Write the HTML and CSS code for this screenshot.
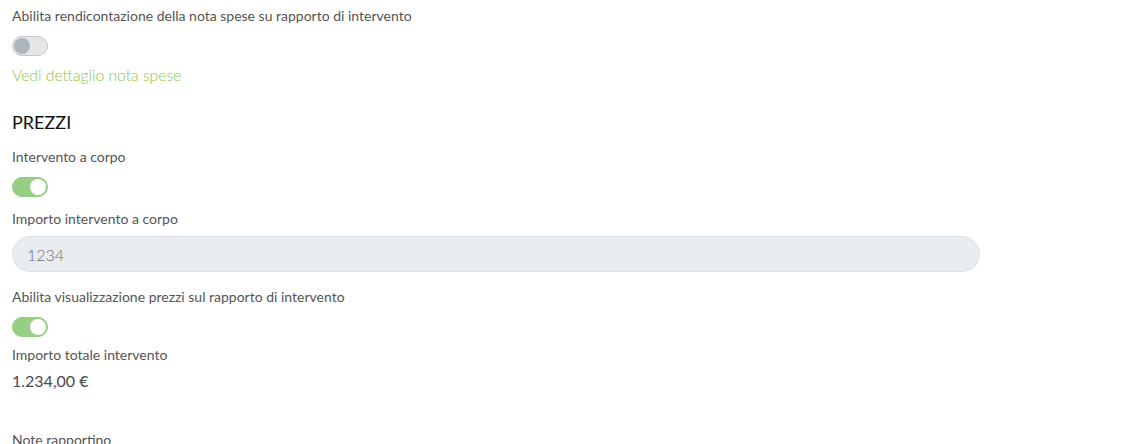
FILE: index.html
```html
<!DOCTYPE html>
<html lang="it">
<head>
    <meta charset="UTF-8">
    <meta name="viewport" content="width=device-width, initial-scale=1.0">
    <title>Rapporto di intervento - Impostazioni</title>
    <link rel="stylesheet" href="styles.css">
</head>
<body>
    <div class="settings">
        <!-- Nota spese -->
        <div class="field">
            <label class="field-label">Abilita rendicontazione della nota spese su rapporto di intervento</label>
            <span class="switch"></span>
        </div>
        <a href="#" class="link">Vedi dettaglio nota spese</a>

        <!-- Prezzi -->
        <h3 class="section-title">PREZZI</h3>

        <div class="field">
            <label class="field-label">Intervento a corpo</label>
            <span class="switch on"></span>
        </div>

        <div class="field">
            <label class="field-label">Importo intervento a corpo</label>
            <input type="text" class="input" placeholder="1234" disabled>
        </div>

        <div class="field after-input">
            <label class="field-label">Abilita visualizzazione prezzi sul rapporto di intervento</label>
            <span class="switch on"></span>
        </div>

        <div class="field total">
            <label class="field-label">Importo totale intervento</label>
            <div class="value">1.234,00 €</div>
        </div>

        <div class="field notes">
            <label class="field-label">Note rapportino</label>
        </div>
    </div>
</body>
</html>
```

FILE: styles.css
```css
/* General Styles */
body {
    font-family: 'Lato', 'Open Sans', sans-serif;
    background-color: #fff;
    color: #555;
    margin: 0;
    padding: 0;
}

.settings {
    display: flex;
    flex-direction: column;
    align-items: flex-start;
    padding: 6px 12px 0 12px;
    width: 968px;
}

.field {
    display: flex;
    flex-direction: column;
    align-items: flex-start;
    width: 100%;
    margin-top: 12px;
}

.field:first-child {
    margin-top: 0;
}

.field-label {
    font-size: 14px;
    line-height: 20px;
    color: #555;
}

/* Switch */
.switch {
    position: relative;
    display: block;
    width: 34px;
    height: 18px;
    margin-top: 10px;
    border: 1px solid #c4c8cc;
    border-radius: 10px;
    background-color: #e6e6e6;
}

.switch::after {
    content: "";
    position: absolute;
    top: 1px;
    left: 1px;
    width: 16px;
    height: 16px;
    border-radius: 50%;
    background-color: #adb5bd;
}

.switch.on {
    border-color: #95cf83;
    background-color: #95cf83;
}

.switch.on::after {
    left: auto;
    right: 1px;
    background-color: #fff;
}

/* Link */
.link {
    margin-top: 8px;
    font-size: 15.7px;
    line-height: 22px;
    font-weight: 300;
    color: #8bc34a;
    text-decoration: none;
}

.section-title {
    margin: 23px 0 0 0;
    font-size: 18px;
    line-height: 26px;
    font-weight: 400;
    color: #111;
}

/* Input */
.input {
    box-sizing: border-box;
    width: 100%;
    height: 36px;
    margin-top: 7px;
    padding: 0 14px;
    border: 1px solid #dcdfe3;
    border-radius: 18px;
    background-color: #e9ecef;
    font-family: inherit;
    font-size: 16px;
    font-weight: 300;
    color: #777;
}

.input::placeholder {
    color: #6f6f6f;
}

.after-input {
    margin-top: 15px;
}

.total {
    margin-top: 8px;
}

.value {
    margin-top: 5px;
    font-size: 16px;
    line-height: 22px;
    color: #4a4a4a;
}

.notes {
    margin-top: 38px;
}
```
